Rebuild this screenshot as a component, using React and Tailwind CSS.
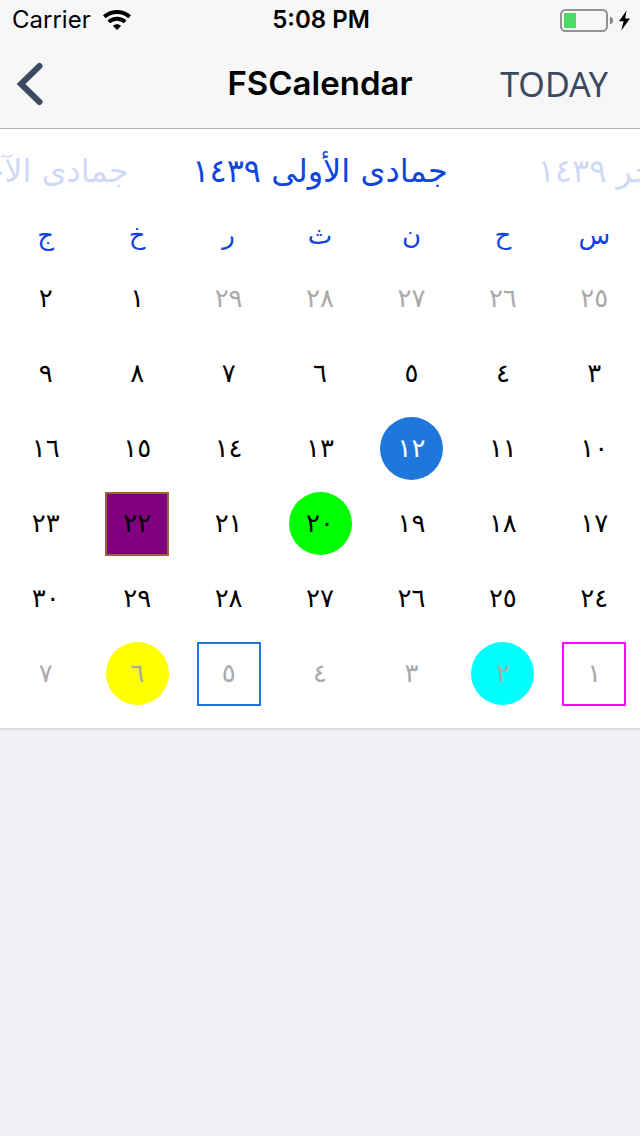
const months = ['ربيع الآخر ١٤٣٩', 'جمادى الأولى ١٤٣٩', 'جمادى الآخرة ١٤٣٩'];
const weekdays = ['س', 'ح', 'ن', 'ث', 'ر', 'خ', 'ج'];
const weeks = [
  ['٢٥', '٢٦', '٢٧', '٢٨', '٢٩', '١', '٢'],
  ['٣', '٤', '٥', '٦', '٧', '٨', '٩'],
  ['١٠', '١١', '١٢', '١٣', '١٤', '١٥', '١٦'],
  ['١٧', '١٨', '١٩', '٢٠', '٢١', '٢٢', '٢٣'],
  ['٢٤', '٢٥', '٢٦', '٢٧', '٢٨', '٢٩', '٣٠'],
  ['١', '٢', '٣', '٤', '٥', '٦', '٧'],
];

const marks = {
  '2-2': 'size-[63px] rounded-full bg-[#1f77db] text-white',
  '3-3': 'size-[63px] rounded-full bg-[#00ff00] text-black',
  '3-5': 'size-16 border-2 border-[#996633] bg-[#800080] text-black',
  '5-0': 'size-16 border-2 border-[#ff00ff] text-[#aaaaaa]',
  '5-1': 'size-[63px] rounded-full bg-[#00ffff] text-[#aaaaaa]',
  '5-4': 'size-16 border-2 border-[#1f77db] text-[#aaaaaa]',
  '5-5': 'size-[63px] rounded-full bg-[#ffff00] text-[#aaaaaa]',
};

function dayStyle(week, day) {
  const outside = (week === 0 && day < 5) || week === 5;
  return marks[`${week}-${day}`] || (outside ? 'size-16 text-[#aaaaaa]' : 'size-16 text-black');
}

function Wifi() {
  return (
    <svg className="h-5 w-7" viewBox="0 0 28 20" fill="none" stroke="#000" strokeWidth="3.9" aria-hidden="true">
      <path d="M1.300 6.800C8.500 0.300 19.500 0.300 26.700 6.800" />
      <path d="M5.800 11.900C10.500 7.600 17.500 7.600 22.200 11.900" />
      <path d="M14 20l-4.200-4.300c2.300-2.100 6.100-2.100 8.400 0z" fill="#000" stroke="none" />
    </svg>
  );
}

function Battery() {
  return (
    <svg className="h-6 w-[70px]" viewBox="0 0 70 24" aria-hidden="true">
      <rect x="1" y="2" width="46" height="21" rx="4.5" fill="none" stroke="#929294" strokeWidth="2" />
      <rect x="4" y="5" width="12" height="15" fill="#4cd964" />
      <path d="M50 8.5c4 1.200 4 6.800 0 8z" fill="#858587" />
      <path d="M66.500 2.500L59 13.300h4.600L61.300 22.500L70 10.600h-4.800z" fill="#000" />
    </svg>
  );
}

export default function App() {
  return (
    <div className="min-h-screen bg-[#efeff4] font-['Inter',sans-serif] text-black">
      <header className="border-b border-[#b2b2b2] bg-[#f7f7f8]">
        <div className="grid h-10 grid-cols-3 items-center px-2.5 pl-3 text-[24px]">
          <div className="flex items-center gap-3">
            <span>Carrier</span>
            <Wifi />
          </div>
          <span className="text-center font-semibold">5:08 PM</span>
          <div className="flex justify-end">
            <Battery />
          </div>
        </div>
        <div className="grid h-[88px] grid-cols-3 items-center pr-8 pl-4">
          <button type="button" aria-label="Back" className="justify-self-start">
            <svg className="h-11 w-7" viewBox="0 0 28 44" fill="none" stroke="#3b4a60" strokeWidth="6" strokeLinecap="round" aria-hidden="true">
              <path d="M23.500 4L5 22L23.500 40" />
            </svg>
          </button>
          <h1 className="justify-self-center pl-4 text-[33px] font-semibold">FSCalendar</h1>
          <button type="button" className="justify-self-end font-['Noto_Sans',sans-serif] text-[34px] text-[#3b4a60]">
            TODAY
          </button>
        </div>
      </header>

      <main lang="ar" dir="rtl" className="border-b-2 border-[#d9d9de] bg-white pb-[17px] font-['DejaVu_Sans',sans-serif]">
        <div className="flex h-20 items-center justify-center overflow-hidden pt-1 text-[32px] whitespace-nowrap text-[#1145dd]">
          {months.map((month, i) => (
            <div key={month} className={i === 1 ? 'flex w-1/2 shrink-0 justify-center' : 'flex w-1/2 shrink-0 justify-center opacity-20'}>
              <span>{month}</span>
            </div>
          ))}
        </div>
        <table className="w-full table-fixed text-[26px]">
          <thead>
            <tr className="h-[52px]">
              {weekdays.map((name) => (
                <th key={name} scope="col" className="p-0 font-normal text-[#1145dd]">{name}</th>
              ))}
            </tr>
          </thead>
          <tbody>
            {weeks.map((week, w) => (
              <tr key={w} className="h-[75px]">
                {week.map((day, d) => (
                  <td key={d} className="p-0">
                    <button type="button" className={`mx-auto flex items-center justify-center ${dayStyle(w, d)}`}>
                      {day}
                    </button>
                  </td>
                ))}
              </tr>
            ))}
          </tbody>
        </table>
      </main>
    </div>
  );
}
